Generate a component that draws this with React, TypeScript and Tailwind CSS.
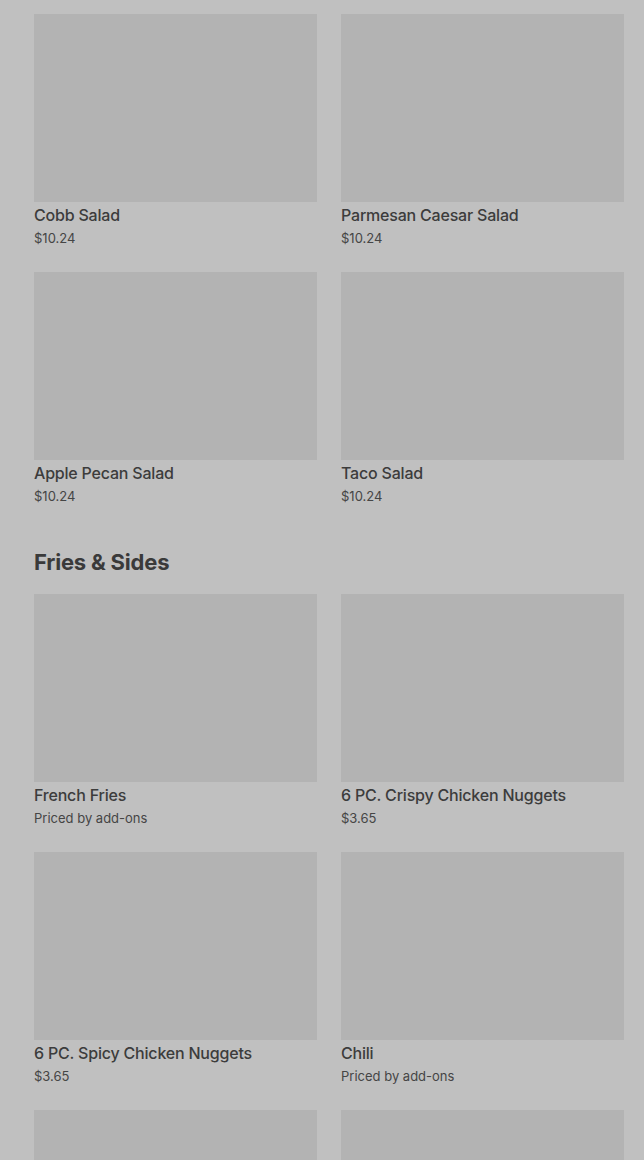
import React from "react";

type Item = { name: string; price: string };

const salads: Item[] = [
  { name: "Cobb Salad", price: "$10.24" },
  { name: "Parmesan Caesar Salad", price: "$10.24" },
  { name: "Apple Pecan Salad", price: "$10.24" },
  { name: "Taco Salad", price: "$10.24" },
];

const sides: Item[] = [
  { name: "French Fries", price: "Priced by add-ons" },
  { name: "6 PC. Crispy Chicken Nuggets", price: "$3.65" },
  { name: "6 PC. Spicy Chicken Nuggets", price: "$3.65" },
  { name: "Chili", price: "Priced by add-ons" },
];

function Card({ item }: { item: Item }) {
  return (
    <div className="flex flex-col">
      <div className="h-[188px] w-full bg-[#b3b3b3]" />
      <div className="mt-[1px] text-[16px] leading-[24px] font-medium tracking-[-0.2px] text-[#3c3c3c] truncate">
        {item.name}
      </div>
      <div className="mt-[1px] text-[13px] leading-[20px] text-[#454545]">{item.price}</div>
    </div>
  );
}

export default function App() {
  return (
    <div
      className="h-[1160px] overflow-hidden bg-[#c0c0c0] pl-[34px] pr-[20px] pt-[14px]"
      style={{ fontFamily: "Inter, 'Noto Sans', sans-serif" }}
    >
      <div className="grid grid-cols-2 gap-x-[24px] gap-y-[24px]">
        {salads.map((s) => (
          <Card key={s.name} item={s} />
        ))}
      </div>
      <h2 className="mt-[42px] text-[22px] leading-[28px] font-bold text-[#3a3a3a] tracking-[-0.2px]">
        Fries &amp; Sides
      </h2>
      <div className="mt-[18px] grid grid-cols-2 gap-x-[24px] gap-y-[24px]">
        {sides.map((s) => (
          <Card key={s.name} item={s} />
        ))}
        <div className="h-[188px] bg-[#b3b3b3]" />
        <div className="h-[188px] bg-[#b3b3b3]" />
      </div>
    </div>
  );
}
